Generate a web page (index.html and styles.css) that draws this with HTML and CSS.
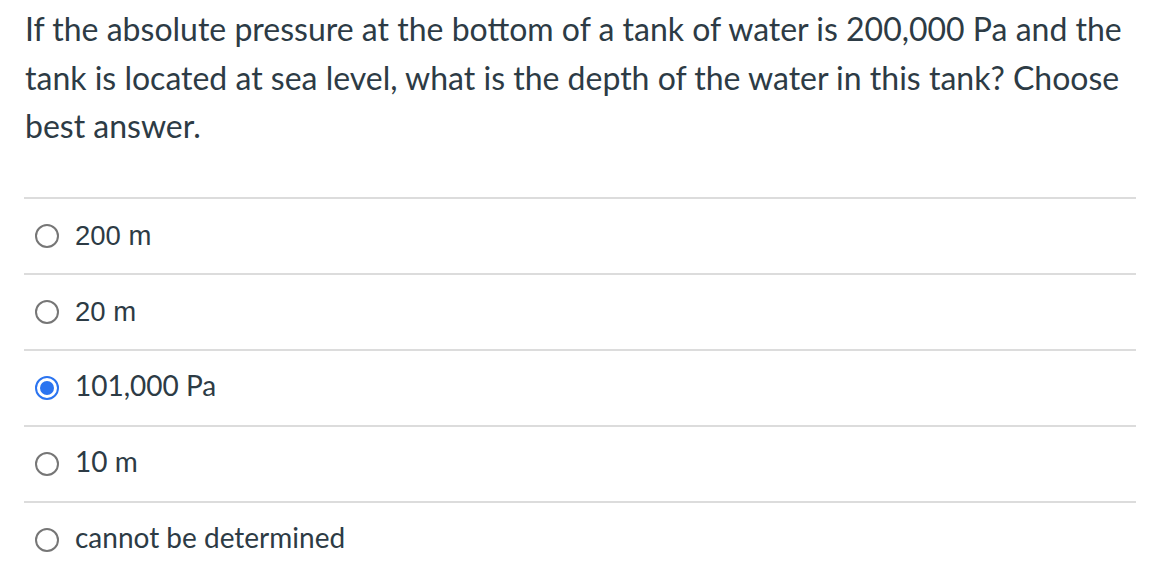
FILE: index.html
```html
<!DOCTYPE html>
<html>
<head>
<meta charset="utf-8">
<link rel="stylesheet" href="styles.css">
</head>
<body>
<div class="quiz">
  <p class="question">If the absolute pressure at the bottom of a tank of water is 200,000 Pa and the tank is located at sea level, what is the depth of the water in this tank? Choose best answer.</p>
  <div class="answers">
    <label class="answer"><span class="radio"></span><span class="label arial">200 m</span></label>
    <label class="answer"><span class="radio"></span><span class="label arial">20 m</span></label>
    <label class="answer"><span class="radio checked"></span><span class="label">101,000 Pa</span></label>
    <label class="answer"><span class="radio"></span><span class="label">10 m</span></label>
    <label class="answer"><span class="radio"></span><span class="label">cannot be determined</span></label>
  </div>
</div>
</body>
</html>
```

FILE: styles.css
```css
html, body {
  margin: 0;
  padding: 0;
  background: #ffffff;
}
.quiz {
  padding: 0 28px 0 24px;
  font-family: Lato, "Liberation Sans", sans-serif;
  color: #2d3b45;
}
.question {
  margin: 0;
  padding: 5px 0 0 1px;
  font-size: 32px;
  line-height: 48.5px;
  height: 192px;
}
.answers {
  display: flex;
  flex-direction: column;
}
.answer {
  display: flex;
  align-items: center;
  height: 74px;
  border-top: 2px solid #dcdcdc;
}
.radio {
  box-sizing: border-box;
  width: 24px;
  height: 24px;
  margin-left: 11px;
  margin-right: 16px;
  border: 2px solid #767676;
  border-radius: 50%;
  flex: none;
  position: relative;
}
.radio.checked {
  border: 2px solid #2b74f0;
}
.radio.checked::after {
  content: "";
  position: absolute;
  left: 3px;
  top: 3px;
  width: 14px;
  height: 14px;
  border-radius: 50%;
  background: #2b74f0;
}
.label {
  font-size: 28px;
  line-height: 32px;
  margin-top: -6px;
}
.label.arial {
  font-family: "Liberation Sans", Arial, sans-serif;
  font-size: 27.5px;
  margin-top: 0;
}
```
